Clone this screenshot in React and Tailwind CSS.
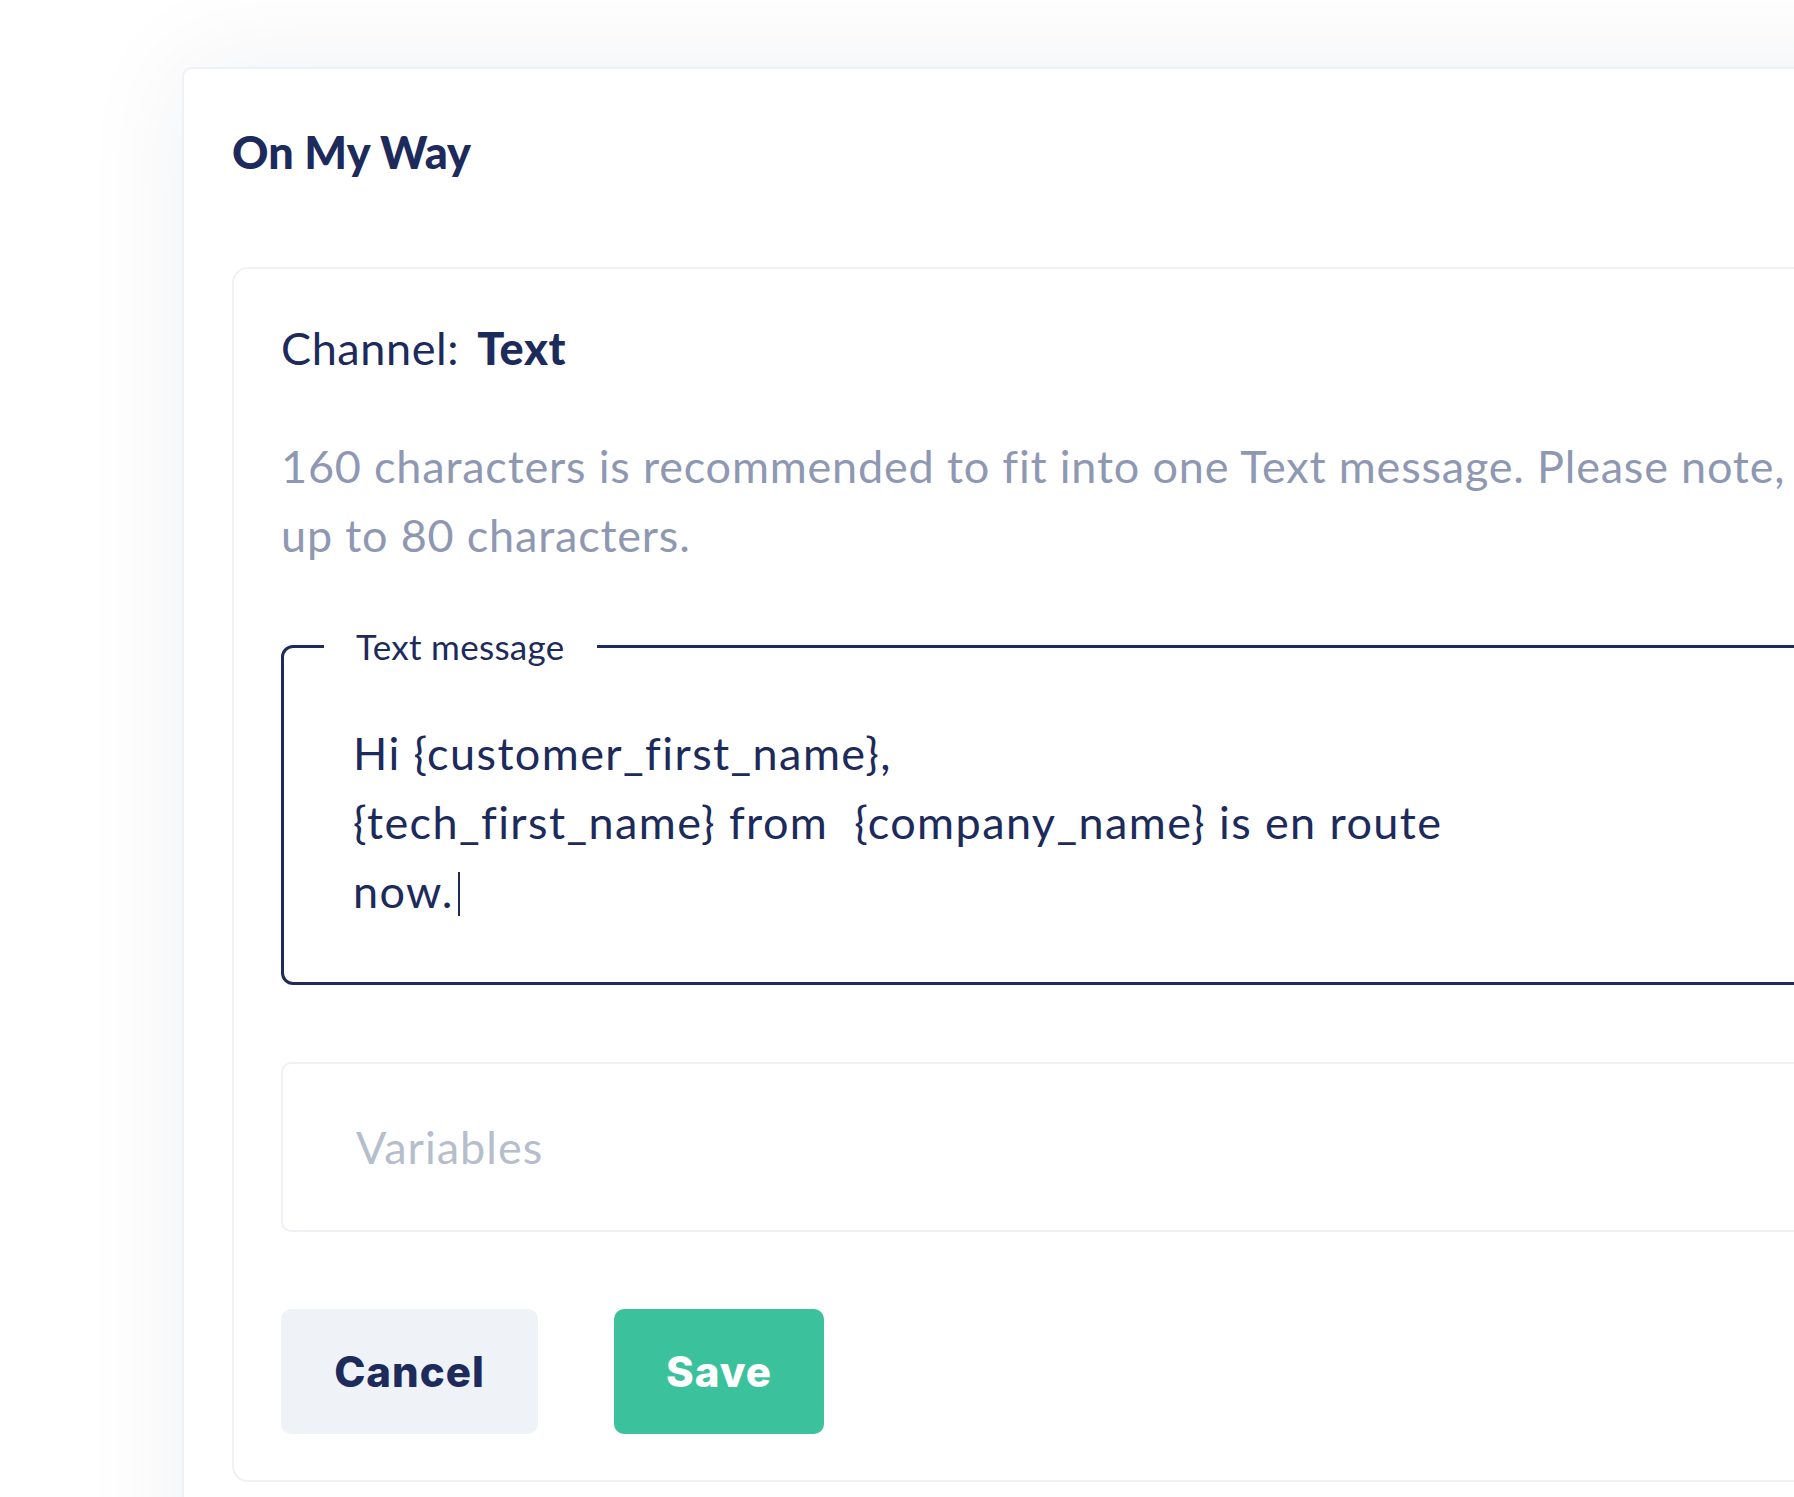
import { useState } from 'react';

const navy = 'text-[#1c2a5c]';

function MessageField() {
  return (
    <fieldset className="w-full border-[3px] border-[#1e2b5c] rounded-[12px] m-0 p-0 min-w-0">
      <legend className="ml-[40px] px-[32px] text-[35px] leading-[44px] text-[#1c2a5c] tracking-[0.3px]">
        Text message
      </legend>
      <div className={`pl-[69px] pt-[51px] pb-[56px] text-[45px] leading-[69px] ${navy} tracking-[1.4px] whitespace-pre`}>
        <div>Hi {'{customer_first_name}'},</div>
        <div>{'{tech_first_name}'} from  {'{company_name}'} is en route</div>
        <div className="flex items-center">
          now.<span className="inline-block w-[2px] h-[44px] bg-[#1c2a5c] ml-[4px] mt-[4px]"></span>
        </div>
      </div>
    </fieldset>
  );
}

function ChannelCard() {
  return (
    <div className="mt-[87px] w-[1700px] border-2 border-[#eef1f6] rounded-[16px] bg-white pl-[47px] pt-[51px] pb-[46px]">
      <div className={`text-[45px] leading-[56px] ${navy} tracking-[0.6px]`}>
        Channel:<span className="ml-[18px] font-black">Text</span>
      </div>

      <div className="mt-[56px] text-[45px] leading-[69px] text-[#8f98b2] tracking-[0.8px] whitespace-nowrap">
        <div>160 characters is recommended to fit into one Text message. Please note,</div>
        <div>up to 80 characters.</div>
      </div>

      <div className="mt-[54px]">
        <MessageField />
      </div>

      <div className="mt-[77px] h-[170px] border-2 border-[#eef1f6] rounded-[10px] pl-[73px] pt-[49px]">
        <div className="text-[45px] leading-[69px] text-[#b6bdcc] tracking-[1px]">Variables</div>
      </div>

      <div className="mt-[77px] flex gap-[76px] font-['Inter',sans-serif] font-extrabold text-[42px]">
        <button className={`w-[257px] h-[125px] rounded-[10px] bg-[#eff3f8] ${navy} tracking-[1px]`}>
          Cancel
        </button>
        <button className="w-[210px] h-[125px] rounded-[10px] bg-[#3cc19d] text-white tracking-[1px]">
          Save
        </button>
      </div>
    </div>
  );
}

export default function App() {
  const [title] = useState('On My Way');
  return (
    <div className="w-[1794px] h-[1497px] overflow-hidden bg-white font-['Lato',sans-serif]">
      <div className="ml-[182px] mt-[67px] w-[1800px] h-[1600px] border-2 border-[#eef1f6] rounded-[10px] bg-white shadow-[0_0_110px_rgba(30,43,92,0.07)] pl-[48px] pt-[55px]">
        <h1 className={`text-[45px] leading-[56px] font-black ${navy}`}>{title}</h1>
        <ChannelCard />
      </div>
    </div>
  );
}
